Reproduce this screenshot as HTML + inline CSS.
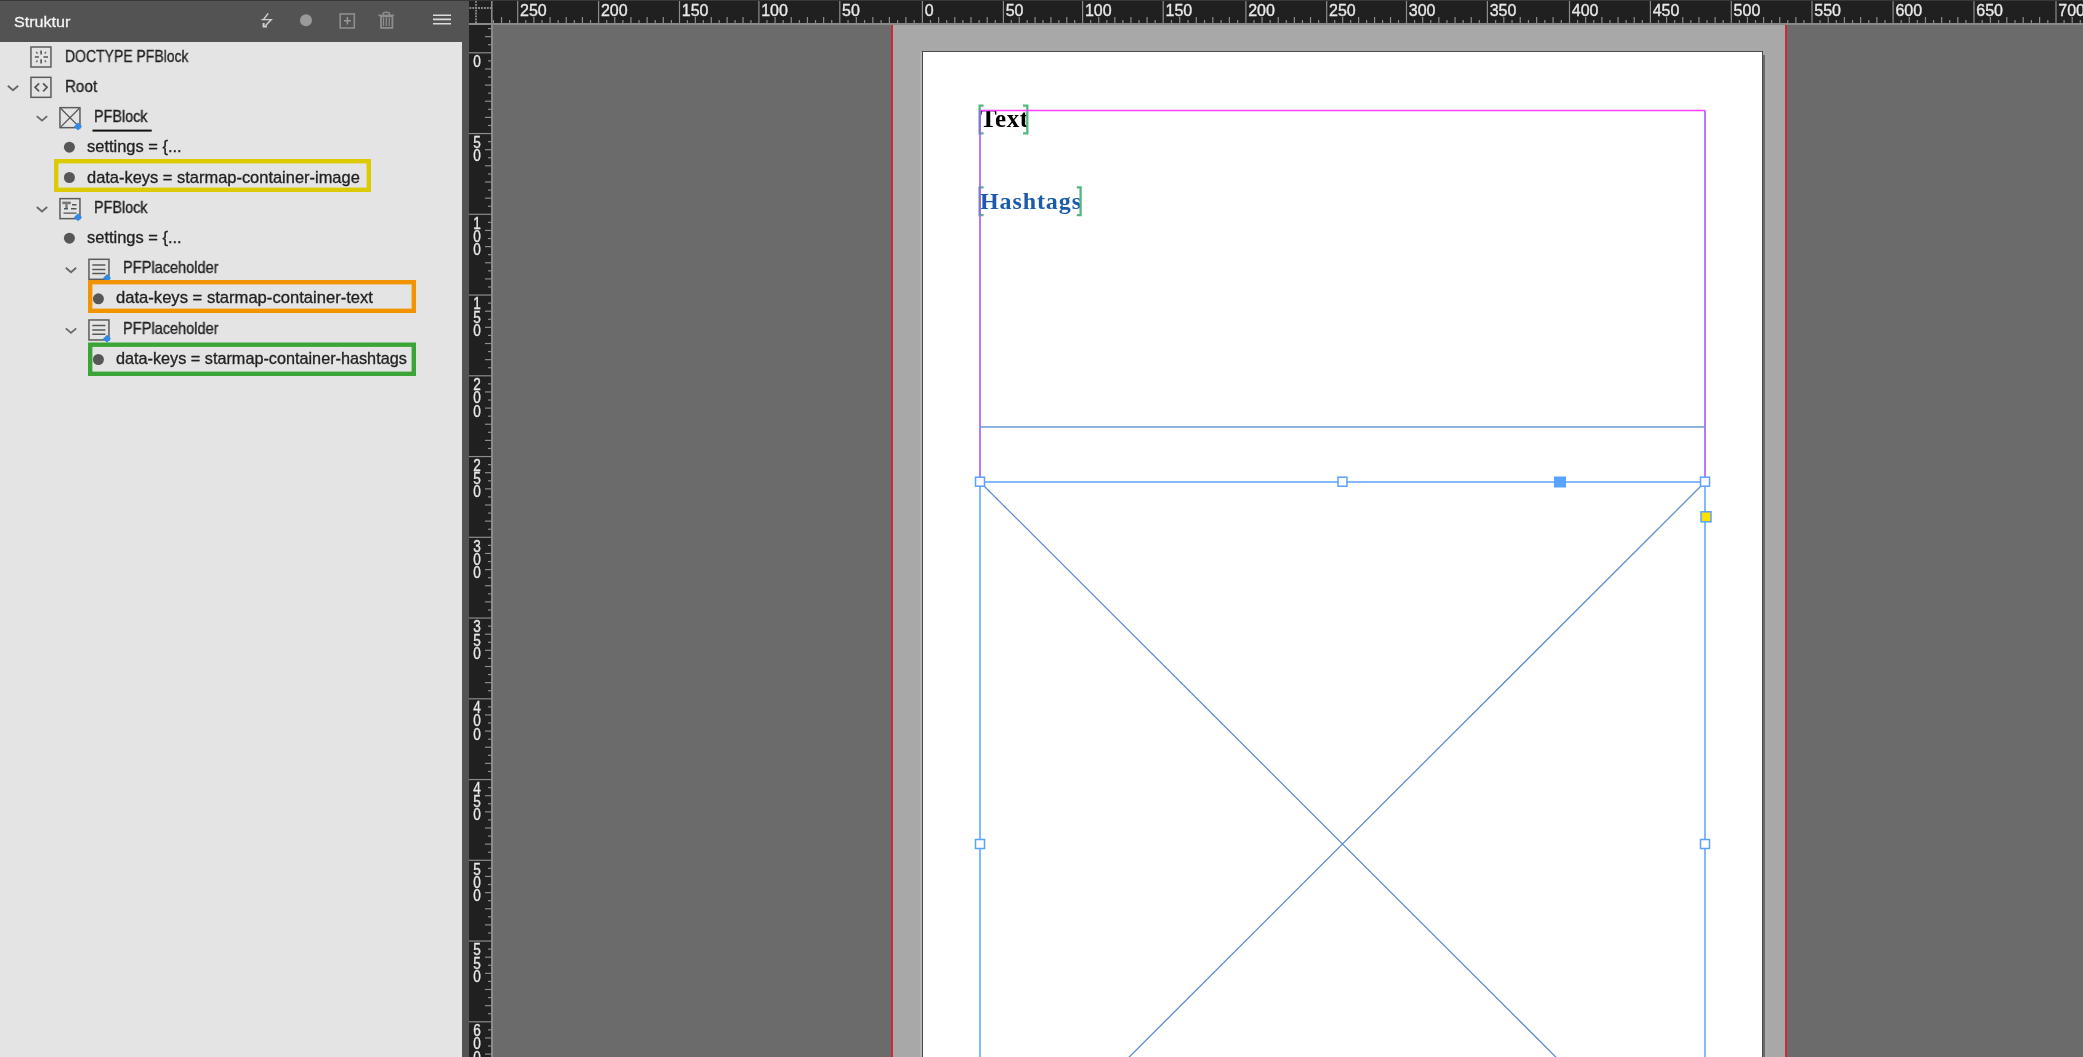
<!DOCTYPE html>
<html><head><meta charset="utf-8">
<style>
html,body{margin:0;padding:0;}
body{width:2083px;height:1057px;overflow:hidden;position:relative;background:#6b6b6b;font-family:"Liberation Sans",sans-serif;}
.abs{position:absolute;}
#topstrip{left:0;top:0;width:2083px;height:1px;background:#383838;}
#panel{left:0;top:1px;width:469px;height:1056px;background:#535353;}
#plist{left:0;top:42px;width:462px;height:1015px;background:#e4e4e4;}
#title{will-change:transform;left:14px;top:11.9px;color:#f4f4f4;font-size:15.5px;line-height:20px;-webkit-text-stroke:0.3px #f4f4f4;transform:scaleX(1.04);transform-origin:0 0;}
.t{position:absolute;will-change:transform;font-size:15.75px;-webkit-text-stroke:0.3px #1e1e1e;line-height:20px;color:#222;white-space:nowrap;transform-origin:0 0;}
#corner{left:469px;top:1px;width:22px;height:22px;background:#202020;}
#hr{left:491px;top:0;width:1592px;height:25px;will-change:transform;}
#vr{left:469px;top:25px;width:24px;height:1032px;will-change:transform;}
.rl{font-family:"Liberation Sans",sans-serif;font-size:16px;fill:#e8e8e8;stroke:#e8e8e8;stroke-width:0.35px;}
.rv{font-family:"Liberation Sans",sans-serif;font-size:16px;fill:#e8e8e8;stroke:#e8e8e8;stroke-width:0.35px;}
#bleed{left:893px;top:25px;width:892px;height:1032px;background:#a8a8a8;}
#redl{left:891px;top:25px;width:2px;height:1032px;background:#cc2a3c;}
#hl{left:920px;top:52px;width:2px;height:1005px;background:#b6b6b6;}
#redr{left:1785px;top:25px;width:2px;height:1032px;background:#cc2a3c;}
#page{left:922px;top:51px;width:839px;height:1010px;background:#fff;border:1px solid #4a4a4a;}
#shadow{left:1763px;top:55px;width:1.5px;height:1002px;background:#6a6a6a;}
.serif{position:absolute;will-change:transform;font-family:"Liberation Serif",serif;font-weight:bold;font-size:25px;line-height:28px;white-space:nowrap;}
</style></head><body>
<div id="topstrip" class="abs"></div>
<div id="panel" class="abs"></div>
<div id="title" class="abs">Struktur</div>
<div id="plist" class="abs"></div>

<!-- header icons -->
<svg class="abs" style="left:250px;top:0" width="219" height="41" viewBox="0 0 219 41">
  <path d="M18.2 13.4 L13.6 19.5 M11.4 19.6 H21.3 L15.6 25.6" fill="none" stroke="#d0d0d0" stroke-width="1.4"/>
  <path d="M13.6 23 L13.6 26.6 L17 26.6" fill="none" stroke="#d0d0d0" stroke-width="2"/>
  <circle cx="56" cy="20.2" r="6" fill="#9a9a9a"/>
  <rect x="90.2" y="13.95" width="14.1" height="14" fill="none" stroke="#8e8e8e" stroke-width="1.6"/>
  <path d="M97.4 17 V24.6 M93.9 20.8 H100.9" stroke="#9a9a9a" stroke-width="1.5"/>
  <path d="M128.4 15.4 H144.2" stroke="#8e8e8e" stroke-width="1.6"/>
  <path d="M133.2 15 V13.6 Q133.2 12.3 136.3 12.3 Q139.5 12.3 139.5 13.6 V15" fill="none" stroke="#8e8e8e" stroke-width="1.4"/>
  <rect x="131" y="16.2" width="11.4" height="11.7" fill="none" stroke="#8e8e8e" stroke-width="1.8"/>
  <path d="M133.5 17.4 V26 M136.3 17.4 V26 M139.2 17.4 V26" stroke="#8e8e8e" stroke-width="1.2"/>
  <path d="M183 15.2 H201 M183 19.4 H201 M183 23.8 H201" stroke="#dcdcdc" stroke-width="1.6"/>
</svg>

<div id="corner" class="abs"></div>
<svg class="abs" style="left:469px;top:0" width="24" height="25">
  <path d="M7 1 V23" stroke="#8e8e8e" stroke-width="1.8" stroke-dasharray="1.8 1.1"/>
  <path d="M0.5 8 H22" stroke="#8e8e8e" stroke-width="1.8" stroke-dasharray="1.8 1.1"/>
  <rect x="0" y="23" width="24" height="2" fill="#8a8a8a"/>
  <rect x="22" y="1" width="1.6" height="24" fill="#8a8a8a"/>
</svg>
<svg id="hr" class="abs" viewBox="491 0 1592 25" width="1592" height="25">
  <rect x="491" y="1" width="1592" height="22" fill="#202020"/>
  <rect x="491" y="1" width="1.6" height="24" fill="#8a8a8a"/>
  <rect x="491" y="23" width="1592" height="2" fill="#8a8a8a"/>
<rect x="492.83" y="20" width="1.2" height="3" fill="#8c8c8c"/>
<rect x="500.92" y="17" width="1.2" height="6" fill="#8c8c8c"/>
<rect x="509.01" y="20" width="1.2" height="3" fill="#8c8c8c"/>
<rect x="517.10" y="1" width="1.2" height="22" fill="#8c8c8c"/>
<text x="520.00" y="16" class="rl">250</text>
<rect x="525.19" y="20" width="1.2" height="3" fill="#8c8c8c"/>
<rect x="533.28" y="17" width="1.2" height="6" fill="#8c8c8c"/>
<rect x="541.37" y="20" width="1.2" height="3" fill="#8c8c8c"/>
<rect x="549.46" y="17" width="1.2" height="6" fill="#8c8c8c"/>
<rect x="557.55" y="20" width="1.2" height="3" fill="#8c8c8c"/>
<rect x="565.64" y="17" width="1.2" height="6" fill="#8c8c8c"/>
<rect x="573.73" y="20" width="1.2" height="3" fill="#8c8c8c"/>
<rect x="581.82" y="17" width="1.2" height="6" fill="#8c8c8c"/>
<rect x="589.91" y="20" width="1.2" height="3" fill="#8c8c8c"/>
<rect x="598.00" y="1" width="1.2" height="22" fill="#8c8c8c"/>
<text x="600.90" y="16" class="rl">200</text>
<rect x="606.09" y="20" width="1.2" height="3" fill="#8c8c8c"/>
<rect x="614.18" y="17" width="1.2" height="6" fill="#8c8c8c"/>
<rect x="622.27" y="20" width="1.2" height="3" fill="#8c8c8c"/>
<rect x="630.36" y="17" width="1.2" height="6" fill="#8c8c8c"/>
<rect x="638.45" y="20" width="1.2" height="3" fill="#8c8c8c"/>
<rect x="646.54" y="17" width="1.2" height="6" fill="#8c8c8c"/>
<rect x="654.63" y="20" width="1.2" height="3" fill="#8c8c8c"/>
<rect x="662.72" y="17" width="1.2" height="6" fill="#8c8c8c"/>
<rect x="670.81" y="20" width="1.2" height="3" fill="#8c8c8c"/>
<rect x="678.90" y="1" width="1.2" height="22" fill="#8c8c8c"/>
<text x="681.80" y="16" class="rl">150</text>
<rect x="686.84" y="20" width="1.2" height="3" fill="#8c8c8c"/>
<rect x="694.78" y="17" width="1.2" height="6" fill="#8c8c8c"/>
<rect x="702.72" y="20" width="1.2" height="3" fill="#8c8c8c"/>
<rect x="710.66" y="17" width="1.2" height="6" fill="#8c8c8c"/>
<rect x="718.60" y="20" width="1.2" height="3" fill="#8c8c8c"/>
<rect x="726.54" y="17" width="1.2" height="6" fill="#8c8c8c"/>
<rect x="734.48" y="20" width="1.2" height="3" fill="#8c8c8c"/>
<rect x="742.42" y="17" width="1.2" height="6" fill="#8c8c8c"/>
<rect x="750.36" y="20" width="1.2" height="3" fill="#8c8c8c"/>
<rect x="758.30" y="1" width="1.2" height="22" fill="#8c8c8c"/>
<text x="761.20" y="16" class="rl">100</text>
<rect x="766.39" y="20" width="1.2" height="3" fill="#8c8c8c"/>
<rect x="774.48" y="17" width="1.2" height="6" fill="#8c8c8c"/>
<rect x="782.57" y="20" width="1.2" height="3" fill="#8c8c8c"/>
<rect x="790.66" y="17" width="1.2" height="6" fill="#8c8c8c"/>
<rect x="798.75" y="20" width="1.2" height="3" fill="#8c8c8c"/>
<rect x="806.84" y="17" width="1.2" height="6" fill="#8c8c8c"/>
<rect x="814.93" y="20" width="1.2" height="3" fill="#8c8c8c"/>
<rect x="823.02" y="17" width="1.2" height="6" fill="#8c8c8c"/>
<rect x="831.11" y="20" width="1.2" height="3" fill="#8c8c8c"/>
<rect x="839.20" y="1" width="1.2" height="22" fill="#8c8c8c"/>
<text x="842.10" y="16" class="rl">50</text>
<rect x="847.46" y="20" width="1.2" height="3" fill="#8c8c8c"/>
<rect x="855.72" y="17" width="1.2" height="6" fill="#8c8c8c"/>
<rect x="863.98" y="20" width="1.2" height="3" fill="#8c8c8c"/>
<rect x="872.24" y="17" width="1.2" height="6" fill="#8c8c8c"/>
<rect x="880.50" y="20" width="1.2" height="3" fill="#8c8c8c"/>
<rect x="888.76" y="17" width="1.2" height="6" fill="#8c8c8c"/>
<rect x="897.02" y="20" width="1.2" height="3" fill="#8c8c8c"/>
<rect x="905.28" y="17" width="1.2" height="6" fill="#8c8c8c"/>
<rect x="913.54" y="20" width="1.2" height="3" fill="#8c8c8c"/>
<rect x="921.80" y="1" width="1.2" height="22" fill="#8c8c8c"/>
<text x="924.70" y="16" class="rl">0</text>
<rect x="929.90" y="20" width="1.2" height="3" fill="#8c8c8c"/>
<rect x="938.00" y="17" width="1.2" height="6" fill="#8c8c8c"/>
<rect x="946.10" y="20" width="1.2" height="3" fill="#8c8c8c"/>
<rect x="954.20" y="17" width="1.2" height="6" fill="#8c8c8c"/>
<rect x="962.30" y="20" width="1.2" height="3" fill="#8c8c8c"/>
<rect x="970.40" y="17" width="1.2" height="6" fill="#8c8c8c"/>
<rect x="978.50" y="20" width="1.2" height="3" fill="#8c8c8c"/>
<rect x="986.60" y="17" width="1.2" height="6" fill="#8c8c8c"/>
<rect x="994.70" y="20" width="1.2" height="3" fill="#8c8c8c"/>
<rect x="1002.80" y="1" width="1.2" height="22" fill="#8c8c8c"/>
<text x="1005.70" y="16" class="rl">50</text>
<rect x="1010.72" y="20" width="1.2" height="3" fill="#8c8c8c"/>
<rect x="1018.64" y="17" width="1.2" height="6" fill="#8c8c8c"/>
<rect x="1026.56" y="20" width="1.2" height="3" fill="#8c8c8c"/>
<rect x="1034.48" y="17" width="1.2" height="6" fill="#8c8c8c"/>
<rect x="1042.40" y="20" width="1.2" height="3" fill="#8c8c8c"/>
<rect x="1050.32" y="17" width="1.2" height="6" fill="#8c8c8c"/>
<rect x="1058.24" y="20" width="1.2" height="3" fill="#8c8c8c"/>
<rect x="1066.16" y="17" width="1.2" height="6" fill="#8c8c8c"/>
<rect x="1074.08" y="20" width="1.2" height="3" fill="#8c8c8c"/>
<rect x="1082.00" y="1" width="1.2" height="22" fill="#8c8c8c"/>
<text x="1084.90" y="16" class="rl">100</text>
<rect x="1090.06" y="20" width="1.2" height="3" fill="#8c8c8c"/>
<rect x="1098.12" y="17" width="1.2" height="6" fill="#8c8c8c"/>
<rect x="1106.18" y="20" width="1.2" height="3" fill="#8c8c8c"/>
<rect x="1114.24" y="17" width="1.2" height="6" fill="#8c8c8c"/>
<rect x="1122.30" y="20" width="1.2" height="3" fill="#8c8c8c"/>
<rect x="1130.36" y="17" width="1.2" height="6" fill="#8c8c8c"/>
<rect x="1138.42" y="20" width="1.2" height="3" fill="#8c8c8c"/>
<rect x="1146.48" y="17" width="1.2" height="6" fill="#8c8c8c"/>
<rect x="1154.54" y="20" width="1.2" height="3" fill="#8c8c8c"/>
<rect x="1162.60" y="1" width="1.2" height="22" fill="#8c8c8c"/>
<text x="1165.50" y="16" class="rl">150</text>
<rect x="1170.87" y="20" width="1.2" height="3" fill="#8c8c8c"/>
<rect x="1179.14" y="17" width="1.2" height="6" fill="#8c8c8c"/>
<rect x="1187.41" y="20" width="1.2" height="3" fill="#8c8c8c"/>
<rect x="1195.68" y="17" width="1.2" height="6" fill="#8c8c8c"/>
<rect x="1203.95" y="20" width="1.2" height="3" fill="#8c8c8c"/>
<rect x="1212.22" y="17" width="1.2" height="6" fill="#8c8c8c"/>
<rect x="1220.49" y="20" width="1.2" height="3" fill="#8c8c8c"/>
<rect x="1228.76" y="17" width="1.2" height="6" fill="#8c8c8c"/>
<rect x="1237.03" y="20" width="1.2" height="3" fill="#8c8c8c"/>
<rect x="1245.30" y="1" width="1.2" height="22" fill="#8c8c8c"/>
<text x="1248.20" y="16" class="rl">200</text>
<rect x="1253.38" y="20" width="1.2" height="3" fill="#8c8c8c"/>
<rect x="1261.46" y="17" width="1.2" height="6" fill="#8c8c8c"/>
<rect x="1269.54" y="20" width="1.2" height="3" fill="#8c8c8c"/>
<rect x="1277.62" y="17" width="1.2" height="6" fill="#8c8c8c"/>
<rect x="1285.70" y="20" width="1.2" height="3" fill="#8c8c8c"/>
<rect x="1293.78" y="17" width="1.2" height="6" fill="#8c8c8c"/>
<rect x="1301.86" y="20" width="1.2" height="3" fill="#8c8c8c"/>
<rect x="1309.94" y="17" width="1.2" height="6" fill="#8c8c8c"/>
<rect x="1318.02" y="20" width="1.2" height="3" fill="#8c8c8c"/>
<rect x="1326.10" y="1" width="1.2" height="22" fill="#8c8c8c"/>
<text x="1329.00" y="16" class="rl">250</text>
<rect x="1334.08" y="20" width="1.2" height="3" fill="#8c8c8c"/>
<rect x="1342.06" y="17" width="1.2" height="6" fill="#8c8c8c"/>
<rect x="1350.04" y="20" width="1.2" height="3" fill="#8c8c8c"/>
<rect x="1358.02" y="17" width="1.2" height="6" fill="#8c8c8c"/>
<rect x="1366.00" y="20" width="1.2" height="3" fill="#8c8c8c"/>
<rect x="1373.98" y="17" width="1.2" height="6" fill="#8c8c8c"/>
<rect x="1381.96" y="20" width="1.2" height="3" fill="#8c8c8c"/>
<rect x="1389.94" y="17" width="1.2" height="6" fill="#8c8c8c"/>
<rect x="1397.92" y="20" width="1.2" height="3" fill="#8c8c8c"/>
<rect x="1405.90" y="1" width="1.2" height="22" fill="#8c8c8c"/>
<text x="1408.80" y="16" class="rl">300</text>
<rect x="1413.99" y="20" width="1.2" height="3" fill="#8c8c8c"/>
<rect x="1422.08" y="17" width="1.2" height="6" fill="#8c8c8c"/>
<rect x="1430.17" y="20" width="1.2" height="3" fill="#8c8c8c"/>
<rect x="1438.26" y="17" width="1.2" height="6" fill="#8c8c8c"/>
<rect x="1446.35" y="20" width="1.2" height="3" fill="#8c8c8c"/>
<rect x="1454.44" y="17" width="1.2" height="6" fill="#8c8c8c"/>
<rect x="1462.53" y="20" width="1.2" height="3" fill="#8c8c8c"/>
<rect x="1470.62" y="17" width="1.2" height="6" fill="#8c8c8c"/>
<rect x="1478.71" y="20" width="1.2" height="3" fill="#8c8c8c"/>
<rect x="1486.80" y="1" width="1.2" height="22" fill="#8c8c8c"/>
<text x="1489.70" y="16" class="rl">350</text>
<rect x="1495.01" y="20" width="1.2" height="3" fill="#8c8c8c"/>
<rect x="1503.22" y="17" width="1.2" height="6" fill="#8c8c8c"/>
<rect x="1511.43" y="20" width="1.2" height="3" fill="#8c8c8c"/>
<rect x="1519.64" y="17" width="1.2" height="6" fill="#8c8c8c"/>
<rect x="1527.85" y="20" width="1.2" height="3" fill="#8c8c8c"/>
<rect x="1536.06" y="17" width="1.2" height="6" fill="#8c8c8c"/>
<rect x="1544.27" y="20" width="1.2" height="3" fill="#8c8c8c"/>
<rect x="1552.48" y="17" width="1.2" height="6" fill="#8c8c8c"/>
<rect x="1560.69" y="20" width="1.2" height="3" fill="#8c8c8c"/>
<rect x="1568.90" y="1" width="1.2" height="22" fill="#8c8c8c"/>
<text x="1571.80" y="16" class="rl">400</text>
<rect x="1576.99" y="20" width="1.2" height="3" fill="#8c8c8c"/>
<rect x="1585.08" y="17" width="1.2" height="6" fill="#8c8c8c"/>
<rect x="1593.17" y="20" width="1.2" height="3" fill="#8c8c8c"/>
<rect x="1601.26" y="17" width="1.2" height="6" fill="#8c8c8c"/>
<rect x="1609.35" y="20" width="1.2" height="3" fill="#8c8c8c"/>
<rect x="1617.44" y="17" width="1.2" height="6" fill="#8c8c8c"/>
<rect x="1625.53" y="20" width="1.2" height="3" fill="#8c8c8c"/>
<rect x="1633.62" y="17" width="1.2" height="6" fill="#8c8c8c"/>
<rect x="1641.71" y="20" width="1.2" height="3" fill="#8c8c8c"/>
<rect x="1649.80" y="1" width="1.2" height="22" fill="#8c8c8c"/>
<text x="1652.70" y="16" class="rl">450</text>
<rect x="1657.89" y="20" width="1.2" height="3" fill="#8c8c8c"/>
<rect x="1665.98" y="17" width="1.2" height="6" fill="#8c8c8c"/>
<rect x="1674.07" y="20" width="1.2" height="3" fill="#8c8c8c"/>
<rect x="1682.16" y="17" width="1.2" height="6" fill="#8c8c8c"/>
<rect x="1690.25" y="20" width="1.2" height="3" fill="#8c8c8c"/>
<rect x="1698.34" y="17" width="1.2" height="6" fill="#8c8c8c"/>
<rect x="1706.43" y="20" width="1.2" height="3" fill="#8c8c8c"/>
<rect x="1714.52" y="17" width="1.2" height="6" fill="#8c8c8c"/>
<rect x="1722.61" y="20" width="1.2" height="3" fill="#8c8c8c"/>
<rect x="1730.70" y="1" width="1.2" height="22" fill="#8c8c8c"/>
<text x="1733.60" y="16" class="rl">500</text>
<rect x="1738.77" y="20" width="1.2" height="3" fill="#8c8c8c"/>
<rect x="1746.84" y="17" width="1.2" height="6" fill="#8c8c8c"/>
<rect x="1754.91" y="20" width="1.2" height="3" fill="#8c8c8c"/>
<rect x="1762.98" y="17" width="1.2" height="6" fill="#8c8c8c"/>
<rect x="1771.05" y="20" width="1.2" height="3" fill="#8c8c8c"/>
<rect x="1779.12" y="17" width="1.2" height="6" fill="#8c8c8c"/>
<rect x="1787.19" y="20" width="1.2" height="3" fill="#8c8c8c"/>
<rect x="1795.26" y="17" width="1.2" height="6" fill="#8c8c8c"/>
<rect x="1803.33" y="20" width="1.2" height="3" fill="#8c8c8c"/>
<rect x="1811.40" y="1" width="1.2" height="22" fill="#8c8c8c"/>
<text x="1814.30" y="16" class="rl">550</text>
<rect x="1819.51" y="20" width="1.2" height="3" fill="#8c8c8c"/>
<rect x="1827.62" y="17" width="1.2" height="6" fill="#8c8c8c"/>
<rect x="1835.73" y="20" width="1.2" height="3" fill="#8c8c8c"/>
<rect x="1843.84" y="17" width="1.2" height="6" fill="#8c8c8c"/>
<rect x="1851.95" y="20" width="1.2" height="3" fill="#8c8c8c"/>
<rect x="1860.06" y="17" width="1.2" height="6" fill="#8c8c8c"/>
<rect x="1868.17" y="20" width="1.2" height="3" fill="#8c8c8c"/>
<rect x="1876.28" y="17" width="1.2" height="6" fill="#8c8c8c"/>
<rect x="1884.39" y="20" width="1.2" height="3" fill="#8c8c8c"/>
<rect x="1892.50" y="1" width="1.2" height="22" fill="#8c8c8c"/>
<text x="1895.40" y="16" class="rl">600</text>
<rect x="1900.59" y="20" width="1.2" height="3" fill="#8c8c8c"/>
<rect x="1908.68" y="17" width="1.2" height="6" fill="#8c8c8c"/>
<rect x="1916.77" y="20" width="1.2" height="3" fill="#8c8c8c"/>
<rect x="1924.86" y="17" width="1.2" height="6" fill="#8c8c8c"/>
<rect x="1932.95" y="20" width="1.2" height="3" fill="#8c8c8c"/>
<rect x="1941.04" y="17" width="1.2" height="6" fill="#8c8c8c"/>
<rect x="1949.13" y="20" width="1.2" height="3" fill="#8c8c8c"/>
<rect x="1957.22" y="17" width="1.2" height="6" fill="#8c8c8c"/>
<rect x="1965.31" y="20" width="1.2" height="3" fill="#8c8c8c"/>
<rect x="1973.40" y="1" width="1.2" height="22" fill="#8c8c8c"/>
<text x="1976.30" y="16" class="rl">650</text>
<rect x="1981.60" y="20" width="1.2" height="3" fill="#8c8c8c"/>
<rect x="1989.80" y="17" width="1.2" height="6" fill="#8c8c8c"/>
<rect x="1998.00" y="20" width="1.2" height="3" fill="#8c8c8c"/>
<rect x="2006.20" y="17" width="1.2" height="6" fill="#8c8c8c"/>
<rect x="2014.40" y="20" width="1.2" height="3" fill="#8c8c8c"/>
<rect x="2022.60" y="17" width="1.2" height="6" fill="#8c8c8c"/>
<rect x="2030.80" y="20" width="1.2" height="3" fill="#8c8c8c"/>
<rect x="2039.00" y="17" width="1.2" height="6" fill="#8c8c8c"/>
<rect x="2047.20" y="20" width="1.2" height="3" fill="#8c8c8c"/>
<rect x="2055.40" y="1" width="1.2" height="22" fill="#8c8c8c"/>
<text x="2058.30" y="16" class="rl">700</text>
<rect x="2063.50" y="20" width="1.2" height="3" fill="#8c8c8c"/>
<rect x="2071.60" y="17" width="1.2" height="6" fill="#8c8c8c"/>
<rect x="2079.70" y="20" width="1.2" height="3" fill="#8c8c8c"/>
</svg>
<svg id="vr" class="abs" width="24" height="1032" viewBox="0 25 24 1032">
  <rect x="0" y="25" width="22" height="1032" fill="#202020"/>
  <rect x="22" y="25" width="2" height="1032" fill="#8a8a8a"/>
<rect x="19" y="27.97" width="3" height="1.2" fill="#8c8c8c"/>
<rect x="16" y="36.05" width="6" height="1.2" fill="#8c8c8c"/>
<rect x="19" y="44.12" width="3" height="1.2" fill="#8c8c8c"/>
<rect x="0" y="52.20" width="22" height="1.2" fill="#8c8c8c"/>
<text transform="translate(8.1 67.20) scale(0.85 1)" x="0" y="0" text-anchor="middle" class="rv">0</text>
<rect x="19" y="60.27" width="3" height="1.2" fill="#8c8c8c"/>
<rect x="16" y="68.35" width="6" height="1.2" fill="#8c8c8c"/>
<rect x="19" y="76.43" width="3" height="1.2" fill="#8c8c8c"/>
<rect x="16" y="84.50" width="6" height="1.2" fill="#8c8c8c"/>
<rect x="19" y="92.58" width="3" height="1.2" fill="#8c8c8c"/>
<rect x="16" y="100.65" width="6" height="1.2" fill="#8c8c8c"/>
<rect x="19" y="108.72" width="3" height="1.2" fill="#8c8c8c"/>
<rect x="16" y="116.80" width="6" height="1.2" fill="#8c8c8c"/>
<rect x="19" y="124.88" width="3" height="1.2" fill="#8c8c8c"/>
<rect x="0" y="132.95" width="22" height="1.2" fill="#8c8c8c"/>
<text transform="translate(8.1 147.95) scale(0.85 1)" x="0" y="0" text-anchor="middle" class="rv">5</text>
<text transform="translate(8.1 161.15) scale(0.85 1)" x="0" y="0" text-anchor="middle" class="rv">0</text>
<rect x="19" y="141.03" width="3" height="1.2" fill="#8c8c8c"/>
<rect x="16" y="149.10" width="6" height="1.2" fill="#8c8c8c"/>
<rect x="19" y="157.18" width="3" height="1.2" fill="#8c8c8c"/>
<rect x="16" y="165.25" width="6" height="1.2" fill="#8c8c8c"/>
<rect x="19" y="173.33" width="3" height="1.2" fill="#8c8c8c"/>
<rect x="16" y="181.40" width="6" height="1.2" fill="#8c8c8c"/>
<rect x="19" y="189.48" width="3" height="1.2" fill="#8c8c8c"/>
<rect x="16" y="197.55" width="6" height="1.2" fill="#8c8c8c"/>
<rect x="19" y="205.63" width="3" height="1.2" fill="#8c8c8c"/>
<rect x="0" y="213.70" width="22" height="1.2" fill="#8c8c8c"/>
<text transform="translate(8.1 228.70) scale(0.85 1)" x="0" y="0" text-anchor="middle" class="rv">1</text>
<text transform="translate(8.1 241.90) scale(0.85 1)" x="0" y="0" text-anchor="middle" class="rv">0</text>
<text transform="translate(8.1 255.10) scale(0.85 1)" x="0" y="0" text-anchor="middle" class="rv">0</text>
<rect x="19" y="221.78" width="3" height="1.2" fill="#8c8c8c"/>
<rect x="16" y="229.85" width="6" height="1.2" fill="#8c8c8c"/>
<rect x="19" y="237.93" width="3" height="1.2" fill="#8c8c8c"/>
<rect x="16" y="246.00" width="6" height="1.2" fill="#8c8c8c"/>
<rect x="19" y="254.08" width="3" height="1.2" fill="#8c8c8c"/>
<rect x="16" y="262.15" width="6" height="1.2" fill="#8c8c8c"/>
<rect x="19" y="270.22" width="3" height="1.2" fill="#8c8c8c"/>
<rect x="16" y="278.30" width="6" height="1.2" fill="#8c8c8c"/>
<rect x="19" y="286.38" width="3" height="1.2" fill="#8c8c8c"/>
<rect x="0" y="294.45" width="22" height="1.2" fill="#8c8c8c"/>
<text transform="translate(8.1 309.45) scale(0.85 1)" x="0" y="0" text-anchor="middle" class="rv">1</text>
<text transform="translate(8.1 322.65) scale(0.85 1)" x="0" y="0" text-anchor="middle" class="rv">5</text>
<text transform="translate(8.1 335.85) scale(0.85 1)" x="0" y="0" text-anchor="middle" class="rv">0</text>
<rect x="19" y="302.52" width="3" height="1.2" fill="#8c8c8c"/>
<rect x="16" y="310.60" width="6" height="1.2" fill="#8c8c8c"/>
<rect x="19" y="318.68" width="3" height="1.2" fill="#8c8c8c"/>
<rect x="16" y="326.75" width="6" height="1.2" fill="#8c8c8c"/>
<rect x="19" y="334.82" width="3" height="1.2" fill="#8c8c8c"/>
<rect x="16" y="342.90" width="6" height="1.2" fill="#8c8c8c"/>
<rect x="19" y="350.97" width="3" height="1.2" fill="#8c8c8c"/>
<rect x="16" y="359.05" width="6" height="1.2" fill="#8c8c8c"/>
<rect x="19" y="367.12" width="3" height="1.2" fill="#8c8c8c"/>
<rect x="0" y="375.20" width="22" height="1.2" fill="#8c8c8c"/>
<text transform="translate(8.1 390.20) scale(0.85 1)" x="0" y="0" text-anchor="middle" class="rv">2</text>
<text transform="translate(8.1 403.40) scale(0.85 1)" x="0" y="0" text-anchor="middle" class="rv">0</text>
<text transform="translate(8.1 416.60) scale(0.85 1)" x="0" y="0" text-anchor="middle" class="rv">0</text>
<rect x="19" y="383.27" width="3" height="1.2" fill="#8c8c8c"/>
<rect x="16" y="391.35" width="6" height="1.2" fill="#8c8c8c"/>
<rect x="19" y="399.43" width="3" height="1.2" fill="#8c8c8c"/>
<rect x="16" y="407.50" width="6" height="1.2" fill="#8c8c8c"/>
<rect x="19" y="415.57" width="3" height="1.2" fill="#8c8c8c"/>
<rect x="16" y="423.65" width="6" height="1.2" fill="#8c8c8c"/>
<rect x="19" y="431.72" width="3" height="1.2" fill="#8c8c8c"/>
<rect x="16" y="439.80" width="6" height="1.2" fill="#8c8c8c"/>
<rect x="19" y="447.88" width="3" height="1.2" fill="#8c8c8c"/>
<rect x="0" y="455.95" width="22" height="1.2" fill="#8c8c8c"/>
<text transform="translate(8.1 470.95) scale(0.85 1)" x="0" y="0" text-anchor="middle" class="rv">2</text>
<text transform="translate(8.1 484.15) scale(0.85 1)" x="0" y="0" text-anchor="middle" class="rv">5</text>
<text transform="translate(8.1 497.35) scale(0.85 1)" x="0" y="0" text-anchor="middle" class="rv">0</text>
<rect x="19" y="464.02" width="3" height="1.2" fill="#8c8c8c"/>
<rect x="16" y="472.10" width="6" height="1.2" fill="#8c8c8c"/>
<rect x="19" y="480.18" width="3" height="1.2" fill="#8c8c8c"/>
<rect x="16" y="488.25" width="6" height="1.2" fill="#8c8c8c"/>
<rect x="19" y="496.32" width="3" height="1.2" fill="#8c8c8c"/>
<rect x="16" y="504.40" width="6" height="1.2" fill="#8c8c8c"/>
<rect x="19" y="512.48" width="3" height="1.2" fill="#8c8c8c"/>
<rect x="16" y="520.55" width="6" height="1.2" fill="#8c8c8c"/>
<rect x="19" y="528.62" width="3" height="1.2" fill="#8c8c8c"/>
<rect x="0" y="536.70" width="22" height="1.2" fill="#8c8c8c"/>
<text transform="translate(8.1 551.70) scale(0.85 1)" x="0" y="0" text-anchor="middle" class="rv">3</text>
<text transform="translate(8.1 564.90) scale(0.85 1)" x="0" y="0" text-anchor="middle" class="rv">0</text>
<text transform="translate(8.1 578.10) scale(0.85 1)" x="0" y="0" text-anchor="middle" class="rv">0</text>
<rect x="19" y="544.77" width="3" height="1.2" fill="#8c8c8c"/>
<rect x="16" y="552.85" width="6" height="1.2" fill="#8c8c8c"/>
<rect x="19" y="560.92" width="3" height="1.2" fill="#8c8c8c"/>
<rect x="16" y="569.00" width="6" height="1.2" fill="#8c8c8c"/>
<rect x="19" y="577.07" width="3" height="1.2" fill="#8c8c8c"/>
<rect x="16" y="585.15" width="6" height="1.2" fill="#8c8c8c"/>
<rect x="19" y="593.22" width="3" height="1.2" fill="#8c8c8c"/>
<rect x="16" y="601.30" width="6" height="1.2" fill="#8c8c8c"/>
<rect x="19" y="609.37" width="3" height="1.2" fill="#8c8c8c"/>
<rect x="0" y="617.45" width="22" height="1.2" fill="#8c8c8c"/>
<text transform="translate(8.1 632.45) scale(0.85 1)" x="0" y="0" text-anchor="middle" class="rv">3</text>
<text transform="translate(8.1 645.65) scale(0.85 1)" x="0" y="0" text-anchor="middle" class="rv">5</text>
<text transform="translate(8.1 658.85) scale(0.85 1)" x="0" y="0" text-anchor="middle" class="rv">0</text>
<rect x="19" y="625.52" width="3" height="1.2" fill="#8c8c8c"/>
<rect x="16" y="633.60" width="6" height="1.2" fill="#8c8c8c"/>
<rect x="19" y="641.67" width="3" height="1.2" fill="#8c8c8c"/>
<rect x="16" y="649.75" width="6" height="1.2" fill="#8c8c8c"/>
<rect x="19" y="657.82" width="3" height="1.2" fill="#8c8c8c"/>
<rect x="16" y="665.90" width="6" height="1.2" fill="#8c8c8c"/>
<rect x="19" y="673.97" width="3" height="1.2" fill="#8c8c8c"/>
<rect x="16" y="682.05" width="6" height="1.2" fill="#8c8c8c"/>
<rect x="19" y="690.12" width="3" height="1.2" fill="#8c8c8c"/>
<rect x="0" y="698.20" width="22" height="1.2" fill="#8c8c8c"/>
<text transform="translate(8.1 713.20) scale(0.85 1)" x="0" y="0" text-anchor="middle" class="rv">4</text>
<text transform="translate(8.1 726.40) scale(0.85 1)" x="0" y="0" text-anchor="middle" class="rv">0</text>
<text transform="translate(8.1 739.60) scale(0.85 1)" x="0" y="0" text-anchor="middle" class="rv">0</text>
<rect x="19" y="706.27" width="3" height="1.2" fill="#8c8c8c"/>
<rect x="16" y="714.35" width="6" height="1.2" fill="#8c8c8c"/>
<rect x="19" y="722.42" width="3" height="1.2" fill="#8c8c8c"/>
<rect x="16" y="730.50" width="6" height="1.2" fill="#8c8c8c"/>
<rect x="19" y="738.57" width="3" height="1.2" fill="#8c8c8c"/>
<rect x="16" y="746.65" width="6" height="1.2" fill="#8c8c8c"/>
<rect x="19" y="754.72" width="3" height="1.2" fill="#8c8c8c"/>
<rect x="16" y="762.80" width="6" height="1.2" fill="#8c8c8c"/>
<rect x="19" y="770.87" width="3" height="1.2" fill="#8c8c8c"/>
<rect x="0" y="778.95" width="22" height="1.2" fill="#8c8c8c"/>
<text transform="translate(8.1 793.95) scale(0.85 1)" x="0" y="0" text-anchor="middle" class="rv">4</text>
<text transform="translate(8.1 807.15) scale(0.85 1)" x="0" y="0" text-anchor="middle" class="rv">5</text>
<text transform="translate(8.1 820.35) scale(0.85 1)" x="0" y="0" text-anchor="middle" class="rv">0</text>
<rect x="19" y="787.02" width="3" height="1.2" fill="#8c8c8c"/>
<rect x="16" y="795.10" width="6" height="1.2" fill="#8c8c8c"/>
<rect x="19" y="803.17" width="3" height="1.2" fill="#8c8c8c"/>
<rect x="16" y="811.25" width="6" height="1.2" fill="#8c8c8c"/>
<rect x="19" y="819.32" width="3" height="1.2" fill="#8c8c8c"/>
<rect x="16" y="827.40" width="6" height="1.2" fill="#8c8c8c"/>
<rect x="19" y="835.47" width="3" height="1.2" fill="#8c8c8c"/>
<rect x="16" y="843.55" width="6" height="1.2" fill="#8c8c8c"/>
<rect x="19" y="851.62" width="3" height="1.2" fill="#8c8c8c"/>
<rect x="0" y="859.70" width="22" height="1.2" fill="#8c8c8c"/>
<text transform="translate(8.1 874.70) scale(0.85 1)" x="0" y="0" text-anchor="middle" class="rv">5</text>
<text transform="translate(8.1 887.90) scale(0.85 1)" x="0" y="0" text-anchor="middle" class="rv">0</text>
<text transform="translate(8.1 901.10) scale(0.85 1)" x="0" y="0" text-anchor="middle" class="rv">0</text>
<rect x="19" y="867.77" width="3" height="1.2" fill="#8c8c8c"/>
<rect x="16" y="875.85" width="6" height="1.2" fill="#8c8c8c"/>
<rect x="19" y="883.92" width="3" height="1.2" fill="#8c8c8c"/>
<rect x="16" y="892.00" width="6" height="1.2" fill="#8c8c8c"/>
<rect x="19" y="900.07" width="3" height="1.2" fill="#8c8c8c"/>
<rect x="16" y="908.15" width="6" height="1.2" fill="#8c8c8c"/>
<rect x="19" y="916.22" width="3" height="1.2" fill="#8c8c8c"/>
<rect x="16" y="924.30" width="6" height="1.2" fill="#8c8c8c"/>
<rect x="19" y="932.37" width="3" height="1.2" fill="#8c8c8c"/>
<rect x="0" y="940.45" width="22" height="1.2" fill="#8c8c8c"/>
<text transform="translate(8.1 955.45) scale(0.85 1)" x="0" y="0" text-anchor="middle" class="rv">5</text>
<text transform="translate(8.1 968.65) scale(0.85 1)" x="0" y="0" text-anchor="middle" class="rv">5</text>
<text transform="translate(8.1 981.85) scale(0.85 1)" x="0" y="0" text-anchor="middle" class="rv">0</text>
<rect x="19" y="948.52" width="3" height="1.2" fill="#8c8c8c"/>
<rect x="16" y="956.60" width="6" height="1.2" fill="#8c8c8c"/>
<rect x="19" y="964.67" width="3" height="1.2" fill="#8c8c8c"/>
<rect x="16" y="972.75" width="6" height="1.2" fill="#8c8c8c"/>
<rect x="19" y="980.82" width="3" height="1.2" fill="#8c8c8c"/>
<rect x="16" y="988.90" width="6" height="1.2" fill="#8c8c8c"/>
<rect x="19" y="996.97" width="3" height="1.2" fill="#8c8c8c"/>
<rect x="16" y="1005.05" width="6" height="1.2" fill="#8c8c8c"/>
<rect x="19" y="1013.12" width="3" height="1.2" fill="#8c8c8c"/>
<rect x="0" y="1021.20" width="22" height="1.2" fill="#8c8c8c"/>
<text transform="translate(8.1 1036.20) scale(0.85 1)" x="0" y="0" text-anchor="middle" class="rv">6</text>
<text transform="translate(8.1 1049.40) scale(0.85 1)" x="0" y="0" text-anchor="middle" class="rv">0</text>
<text transform="translate(8.1 1062.60) scale(0.85 1)" x="0" y="0" text-anchor="middle" class="rv">0</text>
<rect x="19" y="1029.28" width="3" height="1.2" fill="#8c8c8c"/>
<rect x="16" y="1037.35" width="6" height="1.2" fill="#8c8c8c"/>
<rect x="19" y="1045.42" width="3" height="1.2" fill="#8c8c8c"/>
<rect x="16" y="1053.50" width="6" height="1.2" fill="#8c8c8c"/>
<rect x="0" y="1101.95" width="22" height="1.2" fill="#8c8c8c"/>
<text transform="translate(8.1 1116.95) scale(0.85 1)" x="0" y="0" text-anchor="middle" class="rv">6</text>
<text transform="translate(8.1 1130.15) scale(0.85 1)" x="0" y="0" text-anchor="middle" class="rv">5</text>
<text transform="translate(8.1 1143.35) scale(0.85 1)" x="0" y="0" text-anchor="middle" class="rv">0</text>
</svg>

<div id="bleed" class="abs"></div>
<div id="redl" class="abs"></div>
<div id="redr" class="abs"></div>
<div id="hl" class="abs"></div>
<div id="page" class="abs"></div>
<div id="shadow" class="abs"></div>

<!-- page content -->
<div class="serif" style="left:980px;top:104.8px;color:#000;letter-spacing:0.6px;">Text</div>
<div class="serif" style="left:979.5px;top:186.7px;font-size:24px;color:#1b5caa;letter-spacing:0.9px;">Hashtags</div>

<svg class="abs" style="left:0;top:0" width="2083" height="1057">
  <!-- brackets -->
  <g fill="none" stroke="#52b87e" stroke-width="2.3">
    <path d="M983.6 105.6 H979.6 V133.4 H983.6"/>
    <path d="M1023 105.6 H1027.3 V133.4 H1023"/>
    <path d="M983.6 187.4 H979.6 V215.2 H983.6"/>
    <path d="M1076.8 187.4 H1080.6 V215.2 H1076.8"/>
  </g>
  <!-- magenta frame -->
  <path d="M980 110.5 H1705" stroke="#ff40ff" stroke-width="1.5"/>
  <path d="M980 110.5 V482 M1705 110.5 V482" stroke="#a855ff" stroke-width="1.6"/>
  <path d="M980 427 H1705" stroke="#6a9ad6" stroke-width="1.5"/>
  <!-- image frame -->
  <path d="M980 482 H1705 M980 482 V1057 M1705 482 V1057" stroke="#5aa2ff" stroke-width="1.5"/>
  <path d="M980 482 L1705 1206 M1705 482 L980 1206" stroke="#5e8ed2" stroke-width="1.3"/>
  <g fill="#fff" stroke="#5aa2ff" stroke-width="1.5">
    <rect x="975.5" y="477.2" width="9" height="9"/>
    <rect x="1338" y="477.2" width="9" height="9"/>
    <rect x="1700.5" y="477.2" width="9" height="9"/>
    <rect x="975.5" y="839.5" width="9" height="9"/>
    <rect x="1700.5" y="839.5" width="9" height="9"/>
  </g>
  <rect x="1554" y="476.5" width="12" height="11" fill="#5aa2ff"/>
  <rect x="1701" y="511.8" width="10" height="10" fill="#ffe000" stroke="#5aa2ff" stroke-width="1.5"/>
</svg>

<!-- panel list -->
<svg class="abs" style="left:0;top:0" width="462" height="400"><rect x="30.95" y="47.00" width="20" height="20" fill="none" stroke="#5c5c5c" stroke-width="1.5"/>
<g stroke="#555" stroke-width="1.6" fill="none"><path d="M41.1 50.5 V54.5 M41.1 59.3 V63.6 M34.9 57.0 H38.9 M43.4 57.0 H48.0"/></g>
<g stroke="#666" stroke-width="1.3" fill="none"><path d="M36.1 52.0 L37.6 53.5 M46.1 52.0 L44.6 53.5 M36.1 62.0 L37.6 60.5 M46.1 62.0 L44.6 60.5"/></g>
<path d="M7.8 85.7 L13.0 90.2 L18.2 85.7" fill="none" stroke="#686868" stroke-width="1.8"/>
<rect x="30.95" y="77.33" width="20" height="20" fill="none" stroke="#5c5c5c" stroke-width="1.5"/>
<path d="M39.1 83.3 L35.1 87.3 L39.1 91.3 M43.1 83.3 L47.1 87.3 L43.1 91.3" fill="none" stroke="#555" stroke-width="1.7"/>
<path d="M36.8 116.1 L42.0 120.6 L47.2 116.1" fill="none" stroke="#686868" stroke-width="1.8"/>
<rect x="59.95" y="107.66" width="20" height="20" fill="none" stroke="#5c5c5c" stroke-width="1.5"/>
<path d="M60.8 108.5 L79.2 126.9 M79.2 108.5 L60.8 126.9" stroke="#555" stroke-width="1.3"/>
<path d="M78 122.4 L82 126.4 L78 130.4 L74 126.4 Z" fill="#2e8ae8"/>
<circle cx="69.4" cy="147.2" r="5.5" fill="#575757"/>
<circle cx="69.4" cy="177.5" r="5.5" fill="#575757"/>
<rect x="56.2" y="161.2" width="312.6" height="28.6" fill="none" stroke="#dccb00" stroke-width="4.4"/>
<path d="M36.8 207.0 L42.0 211.5 L47.2 207.0" fill="none" stroke="#686868" stroke-width="1.8"/>
<rect x="59.95" y="198.65" width="20" height="20" fill="none" stroke="#5c5c5c" stroke-width="1.5"/>
<g fill="#777"><rect x="62.3" y="201.6" width="8.5" height="2.6"/><rect x="65.3" y="204.2" width="2.4" height="4.4"/></g>
<path d="M72.0 204.8 H76.5 M64.0 208.8 H68.0 M71.0 208.8 H76.5 M63.5 213.1 H76.5" stroke="#555" stroke-width="1.4"/>
<path d="M78 213.3 L82 217.3 L78 221.3 L74 217.3 Z" fill="#2e8ae8"/>
<circle cx="69.4" cy="238.2" r="5.5" fill="#575757"/>
<path d="M65.8 267.7 L71.0 272.2 L76.2 267.7" fill="none" stroke="#686868" stroke-width="1.8"/>
<rect x="88.95" y="259.31" width="20" height="20" fill="none" stroke="#5c5c5c" stroke-width="1.5"/>
<path d="M92.3 264.9 H105.4 M92.3 269.4 H105.4 M92.3 273.6 H105.4" stroke="#585858" stroke-width="1.5"/>
<path d="M107 274.0 L111 278.0 L107 282.0 L103 278.0 Z" fill="#2e8ae8"/>
<circle cx="98.4" cy="298.8" r="5.5" fill="#575757"/>
<rect x="90.2" y="282.2" width="323.6" height="28.6" fill="none" stroke="#f29300" stroke-width="4.4"/>
<path d="M65.8 328.4 L71.0 332.9 L76.2 328.4" fill="none" stroke="#686868" stroke-width="1.8"/>
<rect x="88.95" y="319.97" width="20" height="20" fill="none" stroke="#5c5c5c" stroke-width="1.5"/>
<path d="M92.3 325.6 H105.4 M92.3 330.1 H105.4 M92.3 334.3 H105.4" stroke="#585858" stroke-width="1.5"/>
<path d="M107 334.7 L111 338.7 L107 342.7 L103 338.7 Z" fill="#2e8ae8"/>
<circle cx="98.4" cy="359.5" r="5.5" fill="#575757"/>
<rect x="90.2" y="344.7" width="323.6" height="29.1" fill="none" stroke="#3aa536" stroke-width="4.4"/>
<rect x="92.5" y="129.6" width="59.2" height="2" fill="#111"/></svg>
<div class="t" style="left:65.3px;top:46.70px;transform:scaleX(0.887);">DOCTYPE PFBlock</div>
<div class="t" style="left:65.3px;top:76.90px;transform:scaleX(0.963);">Root</div>
<div class="t" style="left:93.7px;top:107.10px;transform:scaleX(0.911);">PFBlock</div>
<div class="t" style="left:86.8px;top:137.30px;transform:scaleX(1.045);">settings = {...</div>
<div class="t" style="left:86.7px;top:167.50px;transform:scaleX(1.044);">data-keys = starmap-container-image</div>
<div class="t" style="left:93.7px;top:197.70px;transform:scaleX(0.911);">PFBlock</div>
<div class="t" style="left:86.8px;top:227.90px;transform:scaleX(1.045);">settings = {...</div>
<div class="t" style="left:122.5px;top:258.10px;transform:scaleX(0.925);">PFPlaceholder</div>
<div class="t" style="left:115.8px;top:288.30px;transform:scaleX(1.054);">data-keys = starmap-container-text</div>
<div class="t" style="left:122.5px;top:318.50px;transform:scaleX(0.925);">PFPlaceholder</div>
<div class="t" style="left:115.8px;top:348.70px;transform:scaleX(1.03);">data-keys = starmap-container-hashtags</div>
</body></html>
